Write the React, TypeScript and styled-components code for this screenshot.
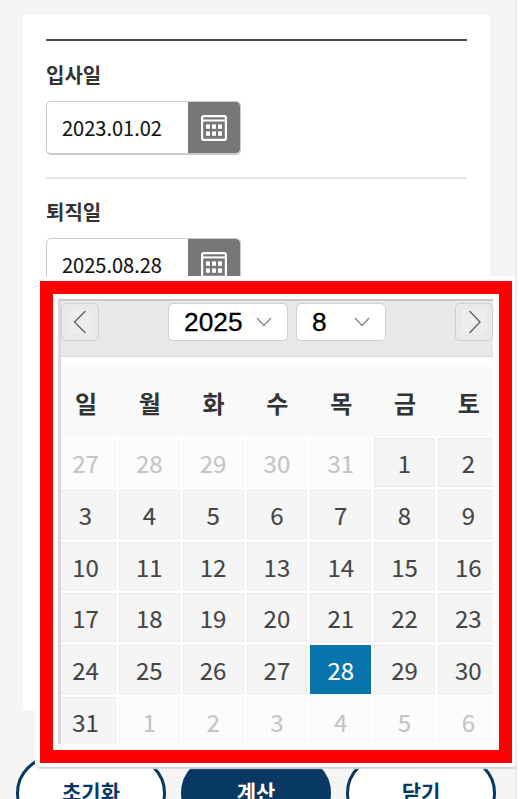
import React from "react";
import styled, { createGlobalStyle, css } from "styled-components";

const GlobalStyle = createGlobalStyle`
  *, *::before, *::after { box-sizing: border-box; }
  body { margin: 0; background: #fff; }
  button { font: inherit; padding: 0; margin: 0; }
`;

const Page = styled.div`
  position: relative;
  width: 517px;
  height: 799px;
  overflow: hidden;
  background: #f5f5f5;
  border-right: 2px solid #ebebeb;
  padding: 15px 0 0 23px;
  font-family: "Noto Sans CJK KR", "Noto Sans", sans-serif;
  color: #333;
`;

const Card = styled.main`
  width: 467px;
  height: 695px;
  background: #fff;
  padding: 24px 23px 0;
`;

const Form = styled.div`
  border-top: 2px solid #4a4a4a;
`;

const Field = styled.section`
  height: 138px;
  padding-top: 19px;
  border-bottom: 2px solid #e4e4e4;
  & + & { padding-top: 18px; }
`;

const Label = styled.label`
  display: block;
  height: 41px;
  font-size: 20px;
  line-height: 30px;
  font-weight: 700;
`;

const DateBox = styled.div`
  display: flex;
  width: 195px;
  height: 54px;
  border: 1.5px solid #cacaca;
  border-bottom-width: 2px;
  border-radius: 5px;
  overflow: hidden;
`;

const DateValue = styled.span`
  flex: 1;
  padding-left: 15px;
  font-size: 20px;
  line-height: 52px;
  color: #111;
  -webkit-text-stroke: 0.12px #111;
`;

const DateButton = styled.button`
  display: flex;
  align-items: center;
  justify-content: center;
  width: 52px;
  border: 0;
  border-radius: 0 4px 4px 0;
  background: #777;
`;

const Popup = styled.div`
  position: absolute;
  left: 35px;
  top: 276px;
  width: 481px;
  height: 491px;
  padding: 5px 4px 5px 5px;
  background: #fff;
  border-radius: 4px;
  box-shadow: 2px 2px 1px #d9d9d9;
`;

const Highlight = styled.div`
  width: 472px;
  height: 482px;
  border: 13.4px solid #f00;
  padding: 4.6px 5px 5px;
`;

const Calendar = styled.div`
  width: 435px;
  height: 445px;
  overflow: hidden;
  border-top: 2px solid #c9c9c9;
  border-left: 3px solid #d9d9d9;
`;

const CalendarHeader = styled.header`
  display: flex;
  height: 56px;
  padding-top: 2px;
  background: #e8e8e8;
  border-bottom: 1px solid #d7d7d7;
`;

const Arrow = styled.button`
  display: flex;
  flex-shrink: 0;
  align-items: center;
  justify-content: center;
  width: 38px;
  height: 38px;
  border: 1.5px solid #cfcfcf;
  border-radius: 5px;
  background: #e9e9e9;
  svg { background: #ededed; }
`;

const Selects = styled.div`
  display: flex;
  flex-shrink: 0;
  gap: 8px;
  margin: 0 69px;
`;

const Select = styled.button<{ $width: number }>`
  display: flex;
  align-items: center;
  justify-content: space-between;
  width: ${(p) => p.$width}px;
  height: 38px;
  padding: 0 15px 0 15px;
  border: 1.5px solid #cfcfcf;
  border-radius: 5px;
  background: #fff;
  color: #000;
  font-family: "Liberation Sans", sans-serif;
  font-size: 26.3px;
  line-height: 36px;
  -webkit-text-stroke: 0.3px #000;
`;

const Grid = styled.div`
  display: grid;
  grid-template-columns: repeat(7, 60.8px);
  column-gap: 3px;
  width: 443.6px;
  margin-left: -5.9px;
`;

const Weekdays = styled(Grid)`
  height: 70px;
  margin-top: 10px;
  background: #f9f9f9;
`;

const Weekday = styled.span`
  padding-left: 1px;
  text-align: center;
  font-size: 24px;
  font-weight: 700;
  line-height: 72px;
`;

const Days = styled(Grid)`
  grid-auto-rows: 48.9px;
  row-gap: 2.8px;
  margin-top: 1.6px;
`;

const Day = styled.span<{ $state: "normal" | "outside" | "selected" }>`
  border: 1.5px solid #eaeaea;
  background: #f5f5f5;
  color: #454545;
  text-align: center;
  font-size: 24px;
  line-height: 48px;
  -webkit-text-stroke: 0.12px currentColor;
  ${(p) => p.$state === "outside" && css`
    border-color: #f8f8f8;
    background: #fcfcfc;
    color: #c4c4c4;
  `}
  ${(p) => p.$state === "selected" && css`
    border-color: #0873ad;
    background: #0873ad;
    color: #fff;
  `}
`;

const Actions = styled.footer`
  position: absolute;
  left: 16px;
  top: 756px;
  display: flex;
  gap: 15px;
`;

const Action = styled.button<{ $primary?: boolean }>`
  display: flex;
  align-items: flex-start;
  justify-content: center;
  width: 150px;
  height: 74px;
  padding-top: 1px;
  border: 3px solid #083963;
  border-radius: 37px;
  background: ${(p) => (p.$primary ? "#083963" : "#fff")};
  color: ${(p) => (p.$primary ? "#fff" : "#083963")};
  font-size: 21px;
  font-weight: 700;
  line-height: 62px;
`;

const CalendarIcon = () => (
  <svg width="26" height="26" viewBox="0 0 26 26" fill="none">
    <rect x="1.1" y="1.1" width="23.8" height="23.8" rx="1.6" stroke="#fff" strokeWidth="2.2" />
    <path d="M2 5.4H24" stroke="#fff" strokeWidth="2" />
    {[9.4, 16.4].map((y) =>
      [5, 11, 17].map((x) => (
        <rect key={`${x}-${y}`} x={x} y={y} width="4" height="4.4" fill="#fff" />
      ))
    )}
  </svg>
);

const ArrowIcon = ({ next = false }: { next?: boolean }) => (
  <svg width="24" height="24" viewBox="0 0 24 24" fill="none">
    <path d={next ? "M7.5 1L18 12L7.5 23" : "M17.5 1L6.5 12L17.5 23"} stroke="#606060" strokeWidth="1.3" />
  </svg>
);

const Chevron = () => (
  <svg width="16" height="10" viewBox="0 0 16 10" fill="none">
    <path d="M1 1L8 8.5L15 1" stroke="#888" strokeWidth="1.3" />
  </svg>
);

const fields = [
  { label: "입사일", value: "2023.01.02" },
  { label: "퇴직일", value: "2025.08.28" },
];

const weekdays = ["일", "월", "화", "수", "목", "금", "토"];

const days = Array.from({ length: 42 }, (_, i) => {
  if (i < 5) return { day: 27 + i, outside: true };
  if (i > 35) return { day: i - 35, outside: true };
  return { day: i - 4, outside: false };
});

export default function App() {
  return (
    <>
      <GlobalStyle />
      <Page>
        <Card>
          <Form>
            {fields.map((f) => (
              <Field key={f.label}>
                <Label>{f.label}</Label>
                <DateBox>
                  <DateValue>{f.value}</DateValue>
                  <DateButton aria-label="calendar">
                    <CalendarIcon />
                  </DateButton>
                </DateBox>
              </Field>
            ))}
          </Form>
        </Card>
        <Actions>
          <Action>초기화</Action>
          <Action $primary>계산</Action>
          <Action>닫기</Action>
        </Actions>
        <Popup>
          <Highlight>
            <Calendar>
              <CalendarHeader>
                <Arrow aria-label="previous"><ArrowIcon /></Arrow>
                <Selects>
                  <Select $width={120}>2025<Chevron /></Select>
                  <Select $width={90}>8<Chevron /></Select>
                </Selects>
                <Arrow aria-label="next"><ArrowIcon next /></Arrow>
              </CalendarHeader>
              <Weekdays>
                {weekdays.map((w) => <Weekday key={w}>{w}</Weekday>)}
              </Weekdays>
              <Days>
                {days.map((d, i) => (
                  <Day
                    key={i}
                    $state={d.outside ? "outside" : d.day === 28 ? "selected" : "normal"}
                  >
                    {d.day}
                  </Day>
                ))}
              </Days>
            </Calendar>
          </Highlight>
        </Popup>
      </Page>
    </>
  );
}
